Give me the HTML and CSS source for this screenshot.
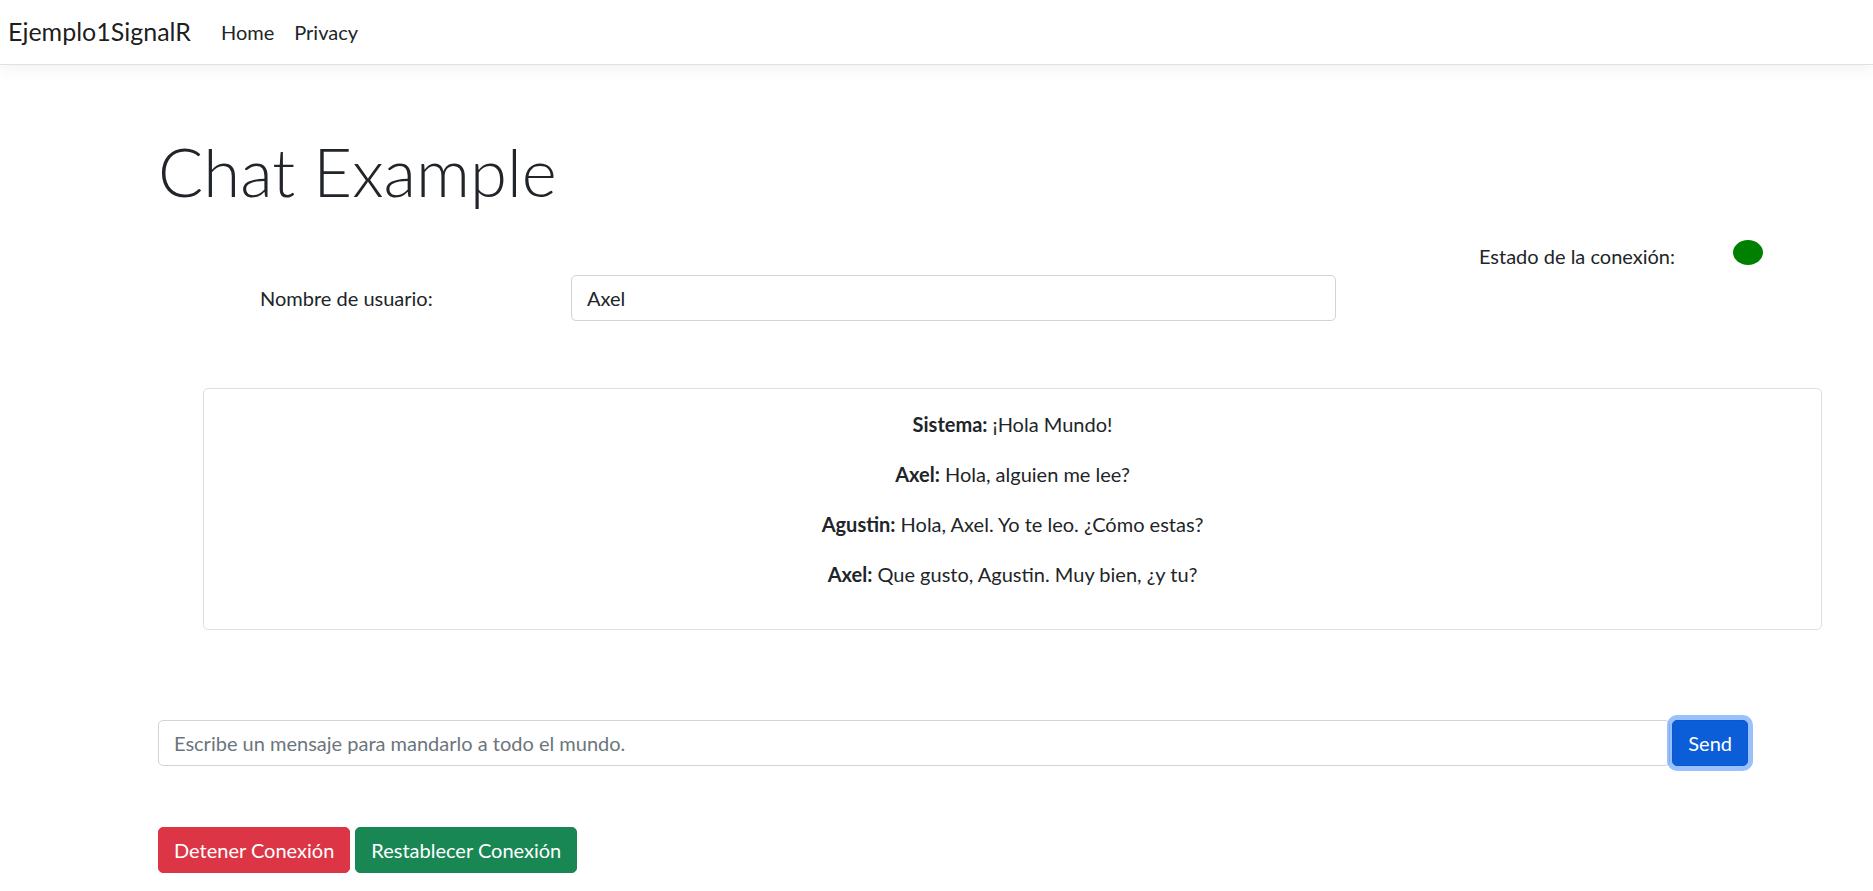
FILE: index.html
```html
<!DOCTYPE html>
<html lang="es">
<head>
<meta charset="utf-8">
<title>Chat Example - Ejemplo1SignalR</title>
<link rel="stylesheet" href="styles.css">
</head>
<body>
<header class="navbar">
  <a class="brand" href="#">Ejemplo1SignalR</a>
  <nav class="nav">
    <a class="nav-link" href="#">Home</a>
    <a class="nav-link" href="#">Privacy</a>
  </nav>
</header>

<main class="page">
  <h1 class="title">Chat Example</h1>

  <div class="status-row">
    <span class="status-label">Estado de la conexión:</span>
    <span class="status-dot"></span>
  </div>

  <div class="user-row">
    <label class="user-label" for="user">Nombre de usuario:</label>
    <input class="form-control user-input" id="user" type="text" value="Axel">
  </div>

  <div class="chat-card">
    <p class="msg"><strong>Sistema:</strong> ¡Hola Mundo!</p>
    <p class="msg"><strong>Axel:</strong> Hola, alguien me lee?</p>
    <p class="msg"><strong>Agustin:</strong> Hola, Axel. Yo te leo. ¿Cómo estas?</p>
    <p class="msg"><strong>Axel:</strong> Que gusto, Agustin. Muy bien, ¿y tu?</p>
  </div>

  <div class="send-row">
    <input class="form-control message-input" type="text" placeholder="Escribe un mensaje para mandarlo a todo el mundo.">
    <button class="btn btn-primary btn-focus" type="button">Send</button>
  </div>

  <div class="actions">
    <button class="btn btn-danger" type="button">Detener Conexión</button>
    <button class="btn btn-success" type="button">Restablecer Conexión</button>
  </div>
</main>
</body>
</html>
```
FILE: styles.css
```css
* { box-sizing: border-box; }

html, body {
  margin: 0;
  background: #fff;
}

body {
  font-family: "Lato", "Open Sans", sans-serif;
  font-size: 20px;
  line-height: 30px;
  color: #212529;
}

/* ---------- navbar ---------- */
.navbar {
  height: 65px;
  display: flex;
  align-items: center;
  padding: 0 0 0 8px;
  border-bottom: 1px solid #dee2e6;
  box-shadow: 0 5px 15px rgba(0, 0, 0, 0.05);
  background: #fff;
}

.brand {
  font-size: 25px;
  line-height: 37.5px;
  color: rgba(0, 0, 0, 0.9);
  text-decoration: none;
  margin-right: 20px;
}

.nav {
  display: flex;
}

.nav-link {
  color: #212529;
  text-decoration: none;
  padding: 0 10px;
  line-height: 30px;
}

/* ---------- page ---------- */
.page {
  padding-left: 158px;
  width: 1822px;
}

.title {
  margin: 66px 0 0;
  font-size: 67px;
  line-height: 81.6px;
  font-weight: 300;
  color: #212529;
}

.status-row {
  margin-top: 28px;
  display: flex;
  justify-content: flex-end;
  align-items: flex-start;
  gap: 58px;
  padding-right: 59px;
}

.status-label {
  line-height: 30px;
}

.status-dot {
  width: 30px;
  height: 25px;
  margin-top: -1px;
  border-radius: 50%;
  background: #008000;
}

.user-row {
  margin-top: 4px;
  display: flex;
  align-items: center;
}

.user-label {
  flex: 0 0 413px;
  padding-left: 102px;
}

.form-control {
  display: block;
  height: 46px;
  padding: 7px 15px;
  font-family: inherit;
  font-size: 20px;
  line-height: 30px;
  color: #212529;
  background: #fff;
  border: 1px solid #ced4da;
  border-radius: 5px;
  outline: none;
}

.form-control::placeholder {
  color: #6c757d;
  opacity: 1;
}

.user-input {
  width: 765px;
}

/* ---------- chat card ---------- */
.chat-card {
  margin: 67px 0 0 45px;
  padding: 20px;
  border: 1px solid #dfdfdf;
  border-radius: 5px;
  text-align: center;
}

.msg {
  margin: 0 0 20px;
}

.msg strong {
  font-weight: 700;
}

/* ---------- send row ---------- */
.send-row {
  margin-top: 90px;
  width: 1590px;
  display: flex;
  align-items: center;
  gap: 2px;
}

.message-input {
  flex: 1 1 auto;
  min-width: 0;
}

/* ---------- buttons ---------- */
.btn {
  display: inline-block;
  height: 46px;
  padding: 7px 15px;
  font-family: inherit;
  font-size: 20px;
  line-height: 30px;
  color: #fff;
  border: 1px solid transparent;
  border-radius: 5px;
  cursor: pointer;
  white-space: nowrap;
}

.btn-primary {
  background: #0b5ed7;
  border-color: #0a58ca;
  flex: 0 0 auto;
}

.btn-focus {
  box-shadow: 0 0 0 5px rgba(49, 132, 253, 0.5);
}

.btn-danger {
  background: #dc3545;
  border-color: #dc3545;
}

.btn-success {
  background: #198754;
  border-color: #198754;
}

.actions {
  margin-top: 61px;
  display: flex;
  gap: 5px;
}
```
